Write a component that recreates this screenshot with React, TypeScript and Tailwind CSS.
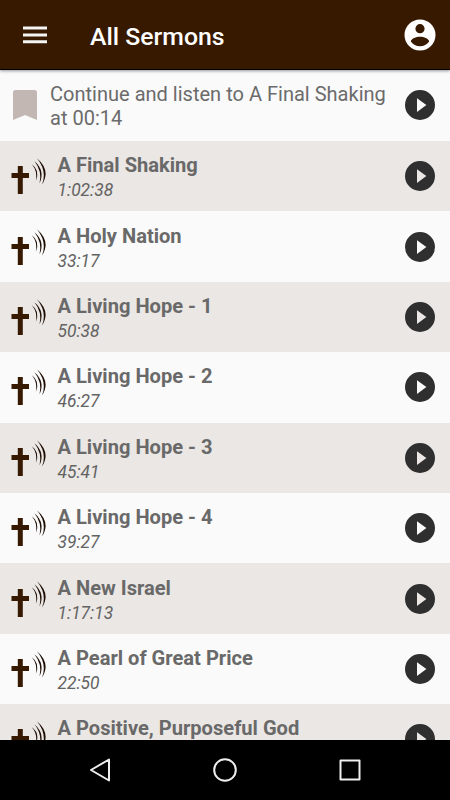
interface Sermon {
  title: string;
  duration?: string;
}

const sermons: Sermon[] = [
  { title: "A Final Shaking", duration: "1:02:38" },
  { title: "A Holy Nation", duration: "33:17" },
  { title: "A Living Hope - 1", duration: "50:38" },
  { title: "A Living Hope - 2", duration: "46:27" },
  { title: "A Living Hope - 3", duration: "45:41" },
  { title: "A Living Hope - 4", duration: "39:27" },
  { title: "A New Israel", duration: "1:17:13" },
  { title: "A Pearl of Great Price", duration: "22:50" },
  { title: "A Positive, Purposeful God" },
];

function PlayIcon() {
  return (
    <svg viewBox="0 0 30 30" className="size-[30px] shrink-0">
      <path
        fill="#2f2f2f"
        fillRule="evenodd"
        d="M15 0a15 15 0 1 1 0 30a15 15 0 0 1 0-30ZM12 8.2v13.8l9.4-6.9Z"
      />
    </svg>
  );
}

function SermonIcon() {
  return (
    <svg viewBox="0 0 36 36" className="h-9 w-9 shrink-0" fill="#371900">
      <path d="M6.8 8.1h5v7h6.2v5h-6.2v15.8h-5V20.1H.5v-5h6.3Z" />
      <g fill="#1d0d04">
        <path d="M20.8 6.3Q29.2 12.2 24.9 22.8Q26.6 12.7 20.8 6.3Z" />
        <path d="M23.5 3.3Q34.4 12.8 28.6 25.2Q31.4 13.3 23.5 3.3Z" />
        <path d="M26 0.2Q40.2 12.5 31 26.6Q36.4 13 26 0.2Z" />
      </g>
    </svg>
  );
}

function Header() {
  return (
    <header className="relative z-10 flex h-[70px] shrink-0 items-center border-b border-black bg-[#371900] pr-[14px] pl-[23px] text-white shadow-[0_1px_3px_rgba(0,0,0,0.4)]">
      <svg viewBox="0 0 24 18" className="h-[18px] w-6" fill="#f4f4f4">
        <path d="M0 .5h24v3H0ZM0 7.5h24v3H0ZM0 14.3h24v3H0Z" />
      </svg>
      <h1 className="ml-[43px] flex-1 pt-[4px] text-[24.8px] leading-[30px] font-medium">
        All Sermons
      </h1>
      <svg viewBox="0 0 32 32" className="size-8" fill="white">
        <path
          fillRule="evenodd"
          d="M16 .5a15.5 15.5 0 1 1 0 31a15.5 15.5 0 0 1 0-31ZM16 5.1a4.6 4.6 0 1 0 0 9.2a4.6 4.6 0 0 0 0-9.2ZM6.8 22.5C9 25.7 12.2 27.2 16 27.2S23 25.7 25.2 22.5C24.5 19.4 20 17.8 16 17.8S7.5 19.4 6.8 22.5Z"
        />
      </svg>
    </header>
  );
}

function ContinueRow() {
  return (
    <div className="flex h-[71px] shrink-0 items-center pr-[15px] pb-px pl-[13px]">
      <svg viewBox="0 0 24 30" className="h-[30px] w-6 shrink-0" fill="#c2b7b2">
        <path d="M2.5 0h19Q24 0 24 2.5V30l-12-5L0 30V2.5Q0 0 2.5 0Z" />
      </svg>
      <p className="ml-[13px] flex-1 pt-px text-[20.05px] leading-6 text-[#6b6b6b]">
        Continue and listen to A Final Shaking
        <br />
        at 00:14
      </p>
      <PlayIcon />
    </div>
  );
}

function SermonRow({ title, duration }: Sermon) {
  return (
    <li className="flex h-[70.4px] shrink-0 items-center pr-[15px] pl-[11px] odd:bg-[#ebe7e4]">
      <SermonIcon />
      <div className="ml-[10.5px] flex-1 self-start pt-[12.3px]">
        <h2 className="text-[20.1px] leading-[25px] font-bold text-[#696969]">{title}</h2>
        {duration && (
          <p className="text-[17.4px] leading-[25px] text-[#636363] italic">{duration}</p>
        )}
      </div>
      <PlayIcon />
    </li>
  );
}

function NavigationBar() {
  return (
    <nav className="flex h-[60px] shrink-0 items-center justify-center gap-[101px] bg-black">
      <svg viewBox="0 0 24 24" className="size-6" fill="none" stroke="#eee" strokeWidth="2" strokeLinejoin="round">
        <path d="M21 1.5v21L3 12Z" />
      </svg>
      <svg viewBox="0 0 24 24" className="size-6" fill="none" stroke="#eee" strokeWidth="2">
        <circle cx="12" cy="12" r="10.8" />
      </svg>
      <svg viewBox="0 0 24 24" className="size-6" fill="none" stroke="#eee" strokeWidth="2" strokeLinejoin="round">
        <path d="M2.5 2.5h19v19h-19Z" />
      </svg>
    </nav>
  );
}

export default function App() {
  return (
    <div className="flex h-[800px] w-[450px] flex-col overflow-hidden bg-[#fafafa] font-[Roboto,sans-serif]">
      <Header />
      <main className="flex min-h-0 flex-1 flex-col overflow-hidden">
        <ContinueRow />
        <ul className="flex flex-col">
          {sermons.map((sermon) => (
            <SermonRow key={sermon.title} {...sermon} />
          ))}
        </ul>
      </main>
      <NavigationBar />
    </div>
  );
}
